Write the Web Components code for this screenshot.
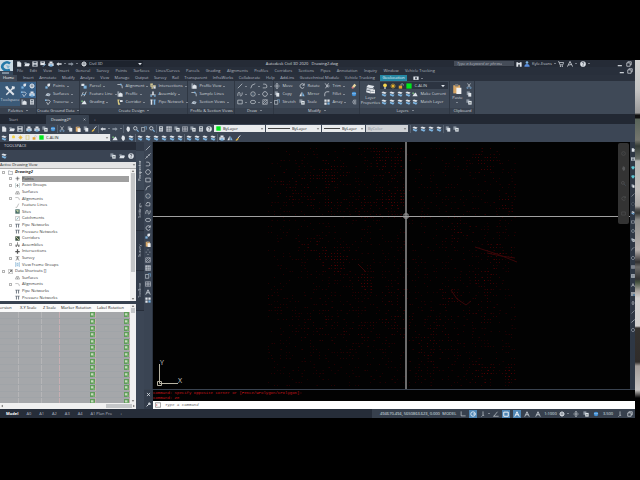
<!DOCTYPE html>
<html lang="en">
<head>
<meta charset="utf-8">
<title>Autodesk Civil 3D 2020</title>
<style>
html { background: #000; }
body { margin: 0; background: #000; color: #c3c9d1; font: 4px/6px "Open Sans", "Noto Sans", sans-serif; }
</style>
</head>
<body>
<c3d-app></c3d-app>
<script>
const W = '#dfe4ea', B = '#7db4e0', G = '#8d97a3', Y = '#f0c24a';
const st = (d, c = W, w = 1.6) => `<path d="${d}" fill="none" stroke="${c}" stroke-width="${w}"/>`;
const fi = (d, c = W) => `<path d="${d}" fill="${c}"/>`;
const ICONS = {
  new: fi('M3 1h7l4 4v10H3z') + fi('M10 1v4h4z', G),
  open: fi('M1 3h5l2 2h6v3H1z', G) + fi('M3 7h13l-3 7H1z'),
  save: fi('M1 1h14v14H1z') + fi('M4 2h8v4H4zM4 9h8v5H4z', '#4a5563'),
  saveas: fi('M1 1h12v10H1z') + fi('M4 2h6v3H4z', '#4a5563') + st('M8 15l7-7', B, 2.4),
  print: fi('M4 1h8v4H4zM1 6h14v7H1z') + fi('M4 9h8v6H4z', B),
  undo: fi('M1 8l6-5v3h8v4H7v3z'),
  redo: fi('M15 8l-6-5v3H1v4h8v3z', G),
  gear: st('M8 0v16M0 8h16M2.5 2.5l11 11M13.5 2.5l-11 11', W, 2) + `<circle cx="8" cy="8" r="5" fill="${W}"/><circle cx="8" cy="8" r="2" fill="#333c49"/>`,
  sheets: fi('M1 1h8v9H1z', G) + fi('M6 5h9v10H6z') + fi('M8 8h5v1H8zM8 11h5v1H8z', '#455'),
  layers: fi('M5 1l10 3-4 4L1 5z') + fi('M3 7l9 3 2-2v3l-3 4-9-4z', B),
  zoom: `<circle cx="6" cy="6" r="4.5" fill="none" stroke="${W}" stroke-width="2"/>` + st('M10 10l5 5', B, 3),
  pan: fi('M3 7l1-1 1 2V2h2v4V1h2v5V2h2v5V4h2v7l-3 4H7z'),
  cut: st('M4 1l7 10M12 1L5 11') + `<circle cx="4" cy="13" r="2" fill="none" stroke="${B}" stroke-width="1.6"/><circle cx="12" cy="13" r="2" fill="none" stroke="${B}" stroke-width="1.6"/>`,
  copy: fi('M2 1h8v10H2z', G) + fi('M6 5h8v10H6z'),
  paste: fi('M2 2h11v13H2z', '#d8a765') + fi('M5 0h5v4H5z', '#777') + fi('M7 6h8v10H7z', '#f2f2f2'),
  brush: st('M14 1L8 8', W, 2.6) + fi('M8 7l2 3-5 5-4-1z', Y),
  grid: fi('M1 1h14v14H1z') + st('M1 6h14M1 11h14M6 1v14M11 1v14', '#3d4857', 1.4),
  calc: fi('M3 1h10v14H3z') + fi('M5 3h6v3H5zM5 8h2v2H5zM9 8h2v2H9zM5 12h2v2H5zM9 12h2v2H9z', '#3d4857'),
  help: `<circle cx="8" cy="8" r="7.5" fill="${W}"/>` + st('M5.5 6q0-3 2.5-3t2.5 2.4Q10.500 7 8 8.500V10M8 11v2', '#2b3442', 1.8),
  bulb: `<circle cx="8" cy="6" r="5" fill="#f4d54d"/>` + fi('M6 11h4v4H6z', W),
  sun: `<circle cx="8" cy="8" r="4" fill="#e8b52e"/>` + st('M8 0v16M0 8h16M2.5 2.5l11 11M13.5 2.5l-11 11', '#e8b52e', 1.3),
  lock: fi('M2 7h9v8H2z', '#e4a32e') + st('M8 7V4q0-2 3-2t3 2v3', '#b9bfc7', 1.8),
  vp: st('M2 2h12v12H2zM5 0v16M11 0v16', '#d9c66a', 1.2),
  green: fi('M1 1h14v14H1z', '#00e81c'),
  tools: st('M2 2l12 12', W, 3) + st('M14 2L2 14', W, 2.4) + fi('M0 1l4-1 2 4-3 2zM11 0l5 1-1 4-4 0z'),
  point: fi('M7 2l7-1-1 7-4 2-3-3z') + fi('M1 9h6v6H1z', B),
  surf: fi('M1 12l5-7 9 3-4 6z') + st('M6 5l5 9M1 12l14-4', '#56708a', 1.2),
  trav: st('M1 3h10l3 4-6 8-4-7', W, 1.8) + fi('M0 1h4v4H0z', B),
  parcel: fi('M1 2h8v6H1z') + fi('M7 7h8v8H7z', B),
  fline: st('M1 14L6 3M8 14l6-12', W, 2) + fi('M4 8h8v2H4z', B),
  grade: fi('M1 14h14L10 4 5 8z') + fi('M1 4h4v4H1z', '#79c27c'),
  align: st('M1 4h9q5 0 4 10', W, 1.8) + fi('M8 2h4v4H8z', B),
  profile: fi('M1 1h5v14H1z', G) + fi('M4 8l5-4 6 3v8H4z'),
  corr: fi('M1 1h6l-2 6 4 8H3z', '#d9ca82') + fi('M8 3h7v5H8z'),
  inter: fi('M1 1h7v4h7v5H8v5H4v-5H1z', '#e0cf92') + fi('M9 9h6v6H9z', W) + st('M6 1v14M1 7h14', '#6b7480', 1.2),
  assem: fi('M1 9h14v2H1zM6 1h4v8H6z') + fi('M1 11h4v4H1zM11 11h4v4h-4z', B),
  pipe: fi('M1 1h6v3H6v11H2V4H1z') + fi('M9 1h6v3h-1v11h-4V4H9z', B),
  line: st('M2 14L14 2'),
  cons: st('M1 15L15 1M4 9l3 3M9 4l3 3'),
  pline: st('M2 13h7q5 0 4-5T8 3H3'),
  circle: `<circle cx="8" cy="8" r="6" fill="none" stroke="${W}" stroke-width="1.5"/>` + fi('M7 7h2v2H7z', B),
  poly: st('M5 2h6l4 6-4 6H5L1 8z'),
  rect: st('M2 3h12v10H2z'),
  arc: st('M2 14Q3 3 14 2'),
  spline: st('M2 13c0-14 7-10 6-4s6 7 6-5'),
  ellipse: `<ellipse cx="8" cy="8" rx="7" ry="4.500" fill="none" stroke="${W}" stroke-width="1.5"/>`,
  cloud: st('M4 13q-5-3 0-5 0-6 5-4 6 0 4 5 1 6-4 4z'),
  hatch: st('M2 2h12v12H2zM2 9l7-7M2 14L14 2M8 14l6-6', W, 1.3),
  dots: fi('M7 1h2v2H7zM2 7h2v2H2zM12 7h2v2h-2zM7 13h2v2H7z'),
  table: st('M1 2h14v12H1zM1 6h14M1 10h14M8 2v12', W, 1.3),
  text: st('M2 15L8 2l6 13M5 10h6', W, 2),
  move: st('M8 1v14M1 8h14M5 4l3-3 3 3M5 12l3 3 3-3', W, 1.6),
  rotate: st('M14 5A6 6 0 1 0 14 11M14 1v5H9', W, 1.8),
  trim: st('M3 1l8 11M12 1L4 14M9 8h6', W, 1.8),
  mirror: fi('M7 2v12H1z') + fi('M9 2v12h6z', B),
  fillet: st('M2 14V8q0-6 6-6h6', W, 1.8),
  stretch: st('M1 4h9v10H1z', W, 1.5) + st('M8 2h7v8', B, 1.5),
  array: fi('M1 1h6v6H1zM9 1h6v6H9zM1 9h6v6H1z') + fi('M9 9h6v6H9z', B),
  offset: st('M14 3H7q-5 5 0 10h7M14 6H9q-2 2 0 4h5', W, 1.4),
  erase: fi('M9 2l5 4-6 7-5-4z', '#e8d9a0') + fi('M3 9l5 4-3 2-4-2z', '#e77c7c'),
  bigLayers: fi('M5 1l10 2-3 4L2 5z') + fi('M3 6l9 2 2-2-1 4-2 1-9-2z', '#c7ced6') + fi('M2 10l7 2v3l-7-2z') + fi('M9 9h7v6H9z', '#f1f1f1') + fi('M10 11h5v1h-5z', '#567'),
  user: `<circle cx="8" cy="4" r="3.500" fill="${B}"/>` + fi('M1 15q0-7 7-7t7 7z', '#5a8fe0'),
  find: fi('M1 3h5v12H1zM10 3h5v12h-5zM6 5h4v4H6z'),
  cart: st('M0 2h3l2 8h8l2-6H4', W, 1.8) + fi('M5 12h3v3H5zM10 12h3v3h-3z'),
  logoA: st('M1 15L8 1l7 14M4 11l8-2', W, 2),
  min: fi('M2 11h11v3H2z'),
  restore: st('M5 5V2h9v8h-3M2 5h9v9H2z', W, 1.8),
  camera: fi('M1 4h14v9H1z') + fi('M6 6h4v5H6z', '#2a313d'),
  down: fi('M3 5h10l-5 6z'),
  up: fi('M3 11h10L8 5z'),
  close: st('M3 3l10 10M13 3L3 13', W, 2.4),
  wrench: st('M2 14l7-7', W, 3) + fi('M8 2l4-1v4h4l-2 4-5 0-2-3z'),
  prompt: st('M1 2h14v12H1z', '#666', 1.6) + st('M3 6l3 2-3 2', '#c44', 1.4),
  folder: st('M1 3h5l2 2h7v9H1z', '#5b636c', 1.4),
  tAlign: st('M1 5h8q5 0 5 8', '#777', 1.4),
  tSurf: st('M1 13L5 5h6l4 8zM5 5l3 8 3-8', '#666', 1.3),
  tGroup: st('M4 2H1v12h3M12 2h3v12h-3', '#8aa', 1.5) + fi('M7 3h2v10H7zM4 7h8v2H4z', '#666'),
  tPoint: fi('M7 2h2v12H7zM2 7h12v2H2z', '#555') + st('M4 4h8v8H4z', '#999', 1),
  tSite: fi('M1 1h14v14H1z', '#4b6f6a') + fi('M3 3l9 1-2 8z', '#c5d5a5'),
  tCatch: st('M2 1h12v14H2z', '#777', 1.3) + st('M5 12l6-8', '#59a', 2),
  tPipe: fi('M1 2h14v3H1zM3 5h3v9H3zM10 5h3v9h-3z', '#6d7680'),
  tCorr: fi('M1 1h14v14H1z', '#3f5547') + st('M3 3l10 10', '#e4dfae', 2.4),
  tAssem: fi('M7 1h2v9H7zM1 9h14v2H1zM2 12h4v3H2zM10 12h4v3h-4z', '#555'),
  tInter: fi('M6 1h4v5h5v4h-5v5H6v-5H1V6h5z', '#555'),
  tSurvey: st('M2 2h12M8 3L3 15M8 3l5 12M8 3v9', '#555', 1.6),
  tFrame: st('M4 2H1v12h3M12 2h3v12h-3M6 4h4v8H6z', '#4f93c4', 1.5),
  tShort: st('M1 1h14v14H1z', '#777', 1.3) + st('M4 12l7-7M6 4h6v6', '#333', 2),
  tFline: st('M2 14h4L12 2', '#777', 1.4),
  osnap: st('M2 3h12v11H2z', '#fff', 2.4),
  polar: `<circle cx="8" cy="8" r="6" fill="none" stroke="#fff" stroke-width="2"/>` + st('M8 8h7', '#fff', 2),
  ortho: st('M3 1v12h12', W, 1.6),
  iso: st('M8 1v10l-4 4M8 11l3 1', W, 1.6),
  angle: st('M1 14h14M2 14L12 2', W, 1.6),
  annoW: st('M2 15L8 2l6 13M5 10h6', '#fff', 2.400),
  cube: `<circle cx="8" cy="8" r="6" fill="#3f8fd6"/>` + st('M3 6q5 4 10 0', '#cfe6fa', 1.400),
  cyan: fi('M3 1h10l2 6-7 8L1 7z', '#5ec5d3'),
  style: fi('M0 0h16v16H0z', '#5f9c5a') + fi('M3 4h8v7H3z', '#c6dcbd') + fi('M10 10h5v5h-5z', '#83b877')
};

const define = (name, css, html, init) => {
  const t = document.createElement('template');
  t.innerHTML = `<style>*{box-sizing:border-box}button,select,input{font:inherit;color:inherit;background:none;border:0;padding:0;margin:0;appearance:none;min-width:0}a{color:inherit;text-decoration:none}${css}</style>${html}`;
  customElements.define(name, class extends HTMLElement {
    connectedCallback() {
      if (this.shadowRoot) return;
      const root = this.attachShadow({ mode: 'open' });
      root.append(t.content.cloneNode(true));
      if (init) init(this, root);
    }
  });
};
const ico = n => `<c3d-icon name="${n}"></c3d-icon>`;

define('c3d-icon', ':host{display:block;flex:none;width:var(--icon,6px);height:var(--icon,6px)}svg{display:block;width:100%;height:100%}', '<svg viewBox="0 0 16 16" aria-hidden="true"></svg>',
  (h, r) => { r.querySelector('svg').innerHTML = ICONS[h.getAttribute('name')] || ''; });

/* Button with an icon, an optional label and an optional drop arrow. */
define('c3d-tool', `:host{display:block;min-width:8px}
button{display:flex;align-items:center;justify-content:center;width:100%;height:8px;gap:2px;white-space:nowrap}
:host([wide]) button{justify-content:flex-start}
:host([on]) button{background:var(--on,#38618a)}
:host([room]){min-width:12px}
:host([tall]) button{flex-direction:column;height:24px;gap:1px;line-height:5px;--icon:10px;white-space:normal}
:host([arrow]) button::after{content:"";border:1px solid transparent;border-top-color:#c3c9d1;margin-top:1px}`,
  '<button type="button"><c3d-icon></c3d-icon><slot></slot></button>',
  (h, r) => {
    r.querySelector('c3d-icon').replaceWith(Object.assign(document.createElement('template'), { innerHTML: ico(h.getAttribute('icon')) }).content);
    if (!h.textContent.trim()) r.querySelector('button').setAttribute('aria-label', h.getAttribute('icon'));
  });
const tool = (i, label = '', attr = '') => `<c3d-tool icon="${i}" ${attr}>${label}</c3d-tool>`;
const tools = s => s.split(' ').map(i => tool(i)).join('');

define('c3d-title', `:host{display:flex;height:7px;background:#252b36;align-items:center;padding-right:2px}
.l{flex:0 0 42%;display:flex;align-items:center}.l{padding-left:15px}
.r{flex:1;display:flex;align-items:center;padding-left:116px;gap:1px}
.ws{display:flex;align-items:center;gap:2px;width:62px;background:#1d232d;margin-left:2px}
h1{font:inherit;margin:0;color:#d5d9df;white-space:pre}
input{width:60px;height:5px;background:#454c58;color:#fff;padding:0 3px}input::placeholder{color:#aeb4bc;font-style:italic}
select{flex:1}.sp{flex:1}`,
  `<div class="l">${tools('new open save saveas print')}${tool('undo', '', 'arrow room')}${tool('redo', '', 'arrow room')}<label class="ws">${ico('gear')}<select aria-label="Workspace"><option>Civil 3D</option></select>${ico('down')}</label></div>
<h1>Autodesk Civil 3D 2020   Drawing2.dwg</h1>
<div class="r"><input type="search" aria-label="Search" placeholder="Type a keyword or phrase">${tool('find')}${tool('user', 'Kyle-Evans', 'arrow')}${tools('cart')}${tool('logoA', '', 'arrow room')}${tool('help', '', 'arrow room')}<span class="sp"></span>${tools('min restore')}</div>`);

define('c3d-menu', `:host{display:flex;height:8px;align-items:center;background:#282f3b;padding:0 1px 0 17px;color:#aeb5bf}
nav{display:flex;justify-content:space-between;flex:0 1 418px;white-space:nowrap}.sp{flex:1}`,
  '<nav></nav><span class="sp"></span>' + tools('min restore'),
  (h, r) => { r.querySelector('nav').innerHTML = 'File,Edit,View,Insert,General,Survey,Points,Surfaces,Lines/Curves,Parcels,Grading,Alignments,Profiles,Corridors,Sections,Pipes,Annotation,Inquiry,Window,Vehicle Tracking'.split(',').map(s => `<a href="#">${s}</a>`).join(''); });

define('c3d-ribbon-tabs', `:host{display:flex;height:6px;align-items:center;background:#2a313d;color:#b3bac4}
nav{display:flex;justify-content:space-between;flex:0 1 407px;white-space:nowrap;margin-right:6px}
a{line-height:6px}a.home{background:#3e4856;color:#fff;padding:0 3px}a.geo{background:#2587a3;color:#e8f6fa;padding:0 2px}`,
  '<nav></nav>' + tool('camera', '', 'arrow'),
  (h, r) => { r.querySelector('nav').innerHTML = 'Home,Insert,Annotate,Modify,Analyze,View,Manage,Output,Survey,Rail,Transparent,InfraWorks,Collaborate,Help,Add-ins,Geotechnical Module,Vehicle Tracking,Geolocation'.split(',').map(s => `<a href="#" class="${s === 'Home' ? 'home' : s === 'Geolocation' ? 'geo' : ''}">${s}</a>`).join(''); });

define('c3d-panel', `:host{display:flex;flex-direction:column;flex:none;border-right:1px solid #2f3743}
.b{display:grid;grid-template-rows:repeat(3,8px);padding:1px 0 2px;height:27px}
h2{margin:0;font:inherit;height:6px;background:#38414e;display:flex;justify-content:center;align-items:center;gap:3px;white-space:nowrap}
h2::after{content:"";border:1px solid transparent;border-top-color:#c3c9d1}:host([plain]) h2::after{display:none}`,
  '<div class="b"><slot></slot></div><h2></h2>',
  (h, r) => { r.querySelector('h2').textContent = h.getAttribute('label'); r.querySelector('.b').style.gridTemplateColumns = h.getAttribute('cols'); });

define('c3d-ribbon', `:host{display:flex;height:33px;background:#3f4957;color:#d0d5dc;overflow:hidden}
.tall{grid-row:span 3}.ts{background:#3b5a78}
.combo{grid-column:2/-1;display:flex;align-items:center;gap:2px;height:7px;background:#2c3441;padding:0 2px;margin-right:1px}.combo select{flex:1}`,
  `<c3d-panel label="Palettes" cols="20px 8px 8px">${tool('tools', 'Toolspace', 'tall class="tall ts"')}${tool('point', '', 'on')}${tool('gear', '', 'on')}${tool('trav', '', 'on')}${tool('print', '', 'on')}${tool('profile')}${tool('calc')}</c3d-panel>
<c3d-panel label="Create Ground Data" cols="8px 34px"><i></i>${tool('point', 'Points', 'wide arrow')}<i></i>${tool('surf', 'Surfaces', 'wide arrow')}<i></i>${tool('trav', 'Traverse', 'wide arrow')}</c3d-panel>
<c3d-panel label="Create Design" cols="1px 36px 33px 37px"><i></i>${tool('parcel', 'Parcel', 'wide arrow')}${tool('align', 'Alignment', 'wide arrow')}${tool('inter', 'Intersections', 'wide arrow')}<i></i>${tool('fline', 'Feature Line', 'wide arrow')}${tool('profile', 'Profile', 'wide arrow')}${tool('assem', 'Assembly', 'wide arrow')}<i></i>${tool('grade', 'Grading', 'wide arrow')}${tool('corr', 'Corridor', 'wide arrow')}${tool('pipe', 'Pipe Network', 'wide arrow')}</c3d-panel>
<c3d-panel label="Profile &amp; Section Views" cols="3px 43px" plain><i></i>${tool('profile', 'Profile View', 'wide arrow')}<i></i>${tool('align', 'Sample Lines', 'wide')}<i></i>${tool('surf', 'Section Views', 'wide arrow')}</c3d-panel>
<c3d-panel label="Draw" cols="13px 13px 12px">${['line', 'arc', 'pline', 'spline', 'circle', 'poly', 'rect', 'ellipse', 'hatch'].map(i => tool(i, '', 'arrow')).join('')}</c3d-panel>
<c3d-panel label="Modify" cols="25px 25px 25px 10px">${tool('move', 'Move', 'wide')}${tool('rotate', 'Rotate', 'wide')}${tool('trim', 'Trim', 'wide arrow')}${tool('erase')}${tool('copy', 'Copy', 'wide')}${tool('mirror', 'Mirror', 'wide')}${tool('fillet', 'Fillet', 'wide arrow')}${tool('cube')}${tool('stretch', 'Stretch', 'wide')}${tool('sheets', 'Scale', 'wide')}${tool('array', 'Array', 'wide arrow')}${tool('offset')}</c3d-panel>
<c3d-panel label="Layers" cols="20px 8px 8px 8px 8px 37px">${tool('bigLayers', 'Layer Properties', 'tall class="tall"')}<label class="combo">${ico('bulb')}${ico('sun')}${ico('lock')}${ico('green')}<select aria-label="Layer"><option>C-ALIN</option></select>${ico('down')}</label>${tools('layers layers layers layers')}${tool('grade', 'Make Current', 'wide')}${tools('layers layers layers layers')}${tool('layers', 'Match Layer', 'wide')}</c3d-panel>
<c3d-panel label="Clipboard" cols="14px 10px" plain>${tool('paste', 'Paste', 'tall arrow class="tall"')}${tools('cut copy sheets')}</c3d-panel>`);

define('c3d-file-tabs', `:host{display:flex;height:10px;align-items:end;background:#222833;color:#aab1bb}
a{height:9px;line-height:9px;display:flex;justify-content:space-between;align-items:center}
.s{width:46px;padding-left:9px}.d{width:43px;background:#37414f;color:#e0e4e9;padding:0 3px 0 5px;--icon:3px;border-radius:1px 1px 0 0}button{width:12px;height:9px}`,
  `<a class="s" href="#">Start</a><a class="d" href="#">Drawing2*${ico('close')}</a><button type="button">+</button>`);

define('c3d-toolbars', `:host{display:block;background:#3c4655;height:18px}
.row{display:flex;height:9px;align-items:center;white-space:nowrap}
.g{display:flex;border-left:1px solid #566170;height:8px}.g:first-child{border:0}
.box{display:flex;align-items:center;gap:2px;height:7px;background:#e9ebed;color:#222;padding:0 1px 0 2px;margin-left:1px;--icon:5px}
.box select{flex:1}.box c3d-icon:last-child{--icon:4px;filter:invert(.6)}
.box hr{flex:1;border:0;height:1px;background:#444;margin:0}
.c{width:51px}.lt{width:55px}.lw{width:43px}.bc{width:42px;background:#cfd2d6;color:#8a8f96;margin-right:2px}.bc select{opacity:1}.ly{width:101px}`,
  `<div class="row"><div class="g">${tools('new open save')}</div><div class="g">${tools('print print sheets cube')}</div><div class="g">${tools('cut copy paste copy brush')}</div><div class="g">${tool('undo', '', 'arrow room')}${tool('redo', '', 'arrow room')}</div><div class="g">${tools('pan zoom stretch zoom')}</div><div class="g">${tools('calc grid sheets table sheets calc help')}</div>
<label class="box c">${ico('green')}<select aria-label="Colour"><option>ByLayer</option></select>${ico('down')}</label><label class="box lt"><hr><select aria-label="Linetype"><option>ByLayer</option></select>${ico('down')}</label><label class="box lw"><hr><select aria-label="Lineweight"><option>ByLayer</option></select>${ico('down')}</label><label class="box bc"><select aria-label="Plot style" disabled><option>ByColor</option></select>${ico('down')}</label><div class="g">${tools('layers layers layers layers')}</div><div class="g">${tools('copy sheets')}</div></div>
<div class="row"><div class="g">${tools('layers')}</div><label class="box ly">${ico('bulb')}${ico('sun')}${ico('vp')}${ico('lock')}${ico('green')}<select aria-label="Current layer"><option>C-ALIN</option></select>${ico('down')}</label><div class="g">${tools('grade pan layers')}</div><div class="g">${tools('layers layers layers layers layers layers')}</div><div class="g">${tools('layers layers layers layers')}</div><div class="g">${tools('print mirror brush')}</div></div>`);

define('c3d-scroll', `:host{display:flex;flex-direction:column;align-items:center;width:6px;background:#f0f0f0;--icon:4px}
:host([flat]){flex-direction:row;width:auto;height:6px}
c3d-icon{filter:invert(.7)}i{flex:var(--len,1);background:#c4c6c8;align-self:stretch;margin:0 1px}b{flex:var(--rest,1)}em{flex:var(--pre,0)}
:host([flat]) i{margin:1px 0}:host([flat]) c3d-icon{transform:rotate(-90deg)}`, `${ico('up')}<em></em><i></i><b></b>${ico('down')}`);

const TREE = [[0, 'folder', 'Drawing2', 1], [1, 'tPoint', 'Points', 1], [1, 'tGroup', 'Point Groups', 1], [1, 'tSurf', 'Surfaces', 0], [1, 'tAlign', 'Alignments', 1], [1, 'tFline', 'Feature Lines', 0], [1, 'tSite', 'Sites', 0], [1, 'tCatch', 'Catchments', 0], [1, 'tPipe', 'Pipe Networks', 1], [1, 'tPipe', 'Pressure Networks', 0], [1, 'tCorr', 'Corridors', 0], [1, 'tAssem', 'Assemblies', 1], [1, 'tInter', 'Intersections', 0], [1, 'tSurvey', 'Survey', 1], [1, 'tFrame', 'View Frame Groups', 0], [0, 'tShort', 'Data Shortcuts []', 1], [1, 'tSurf', 'Surfaces', 0], [1, 'tAlign', 'Alignments', 1], [1, 'tPipe', 'Pipe Networks', 0], [1, 'tPipe', 'Pressure Networks', 0]];
define('c3d-toolspace', `:host{display:flex;flex-direction:column;width:136px;height:267px;background:#3a4453}
h2{font:inherit;margin:0;height:8px;line-height:8px;padding-left:4px;background:#262c38;color:#d5d9df}
.bar{display:flex;height:12px;align-items:center;gap:1px;padding-right:1px}.bar span{flex:1}
.view{display:flex;align-items:center;height:7px;background:#e4e4e4;color:#222;border-bottom:1px solid #aaa}.view select{flex:1}.view c3d-icon{filter:invert(.6);--icon:4px}
.tree{display:flex;height:132px;background:#fff;color:#333}
ul{flex:1;margin:0;padding:0;list-style:none;display:grid;grid-auto-rows:1fr;height:132px}
li{display:flex;align-items:center;gap:2px;padding-left:2px;margin-right:1px;--icon:5px}
li.c{padding-left:9px}li.sel span{background:#a0a0a0;flex:1}li:first-child span{font-style:italic;font-weight:bold}
li i{width:3px;height:3px;margin:0 1px 0 0;border:1px solid transparent}li i.e{border-color:#b4b4b4}
.split{height:3px;background:#37414f}
.data{display:flex;height:99px;background:#f3f3f3;color:#222}
.clip{flex:1;overflow:hidden}
table{table-layout:fixed;width:100%;height:101px;border-collapse:collapse;--icon:5px}
th{font-weight:normal;height:8px;padding:0;text-align:left;white-space:nowrap;background:#fafafa}
th+th{padding-left:2px}
td{background:#a5a7aa;padding:0;border-right:1px solid #c6aeb2;border-bottom:1px solid #a0a4a8}td c3d-icon{margin-left:auto}
td:nth-child(-n+2){border-right-color:#b5b5b7}`,
  `<h2>TOOLSPACE</h2><div class="bar">${tool('layers')}<span></span>${tools('sheets open help')}</div>
<label class="view"><select aria-label="View"><option>Active Drawing View</option></select>${ico('down')}</label>
<div class="tree"><ul></ul><c3d-scroll style="--len:4;--rest:1"></c3d-scroll></div><div class="split"></div>
<div class="data"><div class="clip"><table><colgroup><col style="width:18px"><col style="width:23px"><col style="width:18px"><col style="width:36px"><col></colgroup><thead><tr><th>ersion</th><th>X-Y Scale</th><th>Z Scale</th><th>Marker Rotation</th><th>Label Rotation</th></tr></thead><tbody></tbody></table></div><c3d-scroll style="--len:1;--rest:17"></c3d-scroll></div>
<c3d-scroll flat style="--pre:4;--len:1;--rest:0"></c3d-scroll>`,
  (h, r) => {
    r.querySelector('ul').innerHTML = TREE.map((t, n) => `<li class="${t[0] ? 'c' : ''} ${n === 1 ? 'sel' : ''}"><i class="${t[3] ? 'e' : ''}"></i>${ico(t[1])}<span>${t[2]}</span></li>`).join('');
    r.querySelector('tbody').innerHTML = `<tr><td></td><td></td><td></td><td>${ico('style')}</td><td>${ico('style')}</td></tr>`.repeat(14);
  });

define('c3d-side-tabs', `:host{display:flex;flex-direction:column;width:8px;padding-top:9px;background:#323b49;color:#b6bdc6}
a{writing-mode:vertical-rl;transform:rotate(180deg);text-align:center;line-height:8px;height:40px;border-top:1px solid #262d39}
a.on{background:#3f4a59;color:#e0e4e9}span{flex:1;background:#3c4655}`,
  '<a class="on" href="#">Prospector</a><a href="#">Settings</a><a href="#">Survey</a><a href="#">Toolbox</a><span></span>');

define('c3d-draw-bar', ':host{display:block;width:9px;background:#3a4453;border-right:1px solid #2b3340;padding-top:2px}div{display:grid;grid-auto-rows:1fr;height:149px}', '<div></div>',
  (h, r) => { r.querySelector('div').innerHTML = tools('line cons pline poly rect arc circle cloud spline ellipse rotate point paste dots hatch grid stretch table text array'); });

/* Survey points are scattered on a regular lattice and thickened around a few clusters. */
define('c3d-canvas', `:host{display:block;flex:1;position:relative;background:#020202;overflow:hidden;min-width:0}
svg{position:absolute;left:0;top:0;width:100%;height:100%}
.nav{position:absolute;right:1px;top:1px;width:11px;height:81px;background:#333;display:flex;flex-direction:column;justify-content:space-evenly;align-items:center;border-radius:2px;--icon:5px}.nav>*{opacity:.2}`,
  `<svg aria-label="Model space"><g class="pts"></g><g class="wire"></g><path d="M253 0V248" stroke="#6c6c6c" stroke-width="2"/><path d="M0 74.500H478" stroke="#a0a0a0"/><path d="M251 72h4v4h-4z" fill="none" stroke="#999"/><path d="M6.500 222V241.500H25" fill="none" stroke="#b8b4a4"/><path d="M4.500 239.500h4v4h-4z" fill="none" stroke="#b8b4a4"/><text x="7" y="223" fill="#ccc" font-size="7">Y</text><text x="25" y="241" fill="#ccc" font-size="7">X</text></svg><div class="nav">${tools('circle pan zoom rotate rect')}</div>`,
  (h, r) => {
    let seed = 7; const rnd = () => (seed = (seed * 16807) % 2147483647) / 2147483647;
    const cl = [[175, 32, 18, .7], [236, 14, 22, .8], [240, 60, 18, .9], [180, 60, 12, .7], [150, 50, 18, .5], [130, 44, 16, .35], [212, 60, 16, .5], [182, 118, 16, .9], [160, 104, 14, .5], [212, 140, 16, .6], [240, 152, 14, .5], [115, 152, 6, .7], [332, 20, 16, .7], [354, 60, 12, .6], [305, 90, 16, .5], [345, 110, 16, .7], [332, 138, 14, .8], [298, 155, 14, .5], [332, 165, 16, .6], [284, 190, 24, .4], [330, 232, 14, .8], [355, 232, 10, .9], [205, 190, 20, .3], [166, 180, 24, .3], [270, 215, 24, .3], [240, 180, 20, .4]];
    let s = '';
    for (let y = 6; y < 245; y += 3) for (let x = 115; x < 364; x += 3) {
      let d = .04;
      for (const c of cl) { const q = Math.hypot(x - c[0], y - c[1]) / c[2]; if (q < 1.3) d += c[3] * (1.3 - q) * .6; }
      if (rnd() < .2 + d) s += `<path d="M${x} ${y}h${rnd() < .3 ? 2 : 1}v1h-1z" fill="rgb(${Math.round(24 + Math.min(d, .9) * 105 * rnd() + 14 * rnd())},0,2)"/>`;
    }
    r.querySelector('.pts').innerHTML = s;
    r.querySelector('.wire').innerHTML = '<path d="M322 105l22 7 20 8M334 111l14 3 14 2M298 148l6 9 9 6 5-4M205 122l8 8" fill="none" stroke="#3a0608"/>';
  });

define('c3d-command', `:host{display:flex;height:20px;border-top:1px solid #39424f;background:#020202}
.grip{width:9px;background:#333c4a;--icon:5px;display:flex;flex-direction:column;justify-content:space-around;align-items:center}
.body{flex:1;font-family:"Liberation Mono",monospace;font-size:4px;min-width:0}
p{margin:0;line-height:5px;color:#c8141a;height:11px;padding-top:1px;white-space:pre}
label{display:flex;align-items:center;gap:4px;height:8px;background:#fff;color:#555;padding-left:2px}input{flex:1;height:8px;font-style:italic}input::placeholder{color:#666}`,
  `<div class="grip">${ico('close')}${ico('wrench')}</div><div class="body"><p>Command: Specify opposite corner or [Fence/WPolygon/CPolygon]:
Command: ZE</p><label>${ico('prompt')}<input type="text" aria-label="Command" placeholder="Type a command"></label></div>`);

define('c3d-status', `:host{display:flex;height:9px;background:#262d39;align-items:center;white-space:nowrap}
nav{display:flex;align-items:center;gap:8px;padding-left:6px;color:#b4bbc5}nav b{color:#fff}
.sp{flex:1}.r{display:flex;align-items:center;justify-content:space-between;width:263px;height:9px;padding:0 1px 0 8px;background:#37404d;color:#dfe3e8;--on:#4f86b5}`,
  `<nav><a href="#"><b>Model</b></a><a href="#">A0</a><a href="#">A1</a><a href="#">A2</a><a href="#">A3</a><a href="#">A4</a><a href="#">A1 Plan Pro</a><a href="#">+</a></nav><span class="sp"></span>
<div class="r"><span>494670.494, 5650863.623, 0.000</span><span>MODEL</span>${tool('ortho')}${tool('polar', '', 'on')}${tool('iso', '', 'arrow')}${tool('angle')}${tool('osnap', '', 'on')}${tool('annoW', '', 'on')}${tool('text')}${tool('text')}<span>1:1000</span>${tool('gear', '', 'arrow')}${tool('move')}${tool('sheets')}${tool('cube')}<span>3.500</span>${tools('iso restore')}</div>`);

define('c3d-edge', `:host{display:block;width:5px;background:linear-gradient(#d2d2d2 0,#c4c4c4 30px,#999 53px,#111 55px,#111 58px,#59645a 59px,#75766e 80px,#343b36 86px,#6a706b 99px,#b4b4b2 101px,#c0bebc 130px,#a8a6a4 146px,#555 149px,#343634 153px,#8e8e8c 160px,#b5afac 190px,#302f30 202px,#6c6b69 207px,#333 219px,#42503d 222px,#aaa5a0 231px,#d3d1d0 238px,#d0cfce 266px,#34322f 268px,#302c2a 302px,#a39d99 306px,#c5c2c0 330px,#000 338px)}`, '');

define('c3d-gutter', ':host{display:flex;flex-direction:column;align-items:center;width:5px;background:#2e3744;--icon:4px;gap:5px;padding-top:6px;overflow:hidden}',
  'new save cyan cyan copy line dots layers rect circle sheets arc poly table grid text array move line cons poly'.split(' ').map(ico).join(''));

define('c3d-app', `:host{display:flex;padding-top:60px;min-height:100vh;box-sizing:border-box;background:#000;align-items:flex-start}
main{flex:1;min-width:0;position:relative}.body{display:flex}.right{flex:1;display:flex;flex-direction:column;min-width:0}.top{flex:1;display:flex;min-height:0}
c3d-edge{height:338px}
.logo{position:absolute;left:0;top:0;width:13px;height:15px;background:#c8d9e4}.logo svg{display:block;width:13px;height:15px}`,
  `<main><c3d-title></c3d-title><c3d-menu></c3d-menu><c3d-ribbon-tabs></c3d-ribbon-tabs>
<button class="logo" type="button" aria-label="Application menu"><svg viewBox="0 0 13 15"><path d="M0 0h13v15H0z" fill="#cbd9e2"/><path d="M10 3.500Q7 1 4 3.500T3 8.500q2 3 7 1.500" fill="none" stroke="#2479a8" stroke-width="2.600"/><path d="M6 5l4 1-2 3z" fill="#7fb5d3"/><path d="M0 11h13v4H0z" fill="#36475a"/><path d="M2 13h7" stroke="#c6d4df"/></svg></button>
<c3d-ribbon></c3d-ribbon><c3d-file-tabs></c3d-file-tabs><c3d-toolbars></c3d-toolbars>
<div class="body"><c3d-toolspace></c3d-toolspace><c3d-side-tabs></c3d-side-tabs><div class="right"><div class="top"><c3d-draw-bar></c3d-draw-bar><c3d-canvas></c3d-canvas><c3d-gutter></c3d-gutter></div><c3d-command></c3d-command></div></div>
<c3d-status></c3d-status></main><c3d-edge></c3d-edge>`);
</script>
</body>
</html>
